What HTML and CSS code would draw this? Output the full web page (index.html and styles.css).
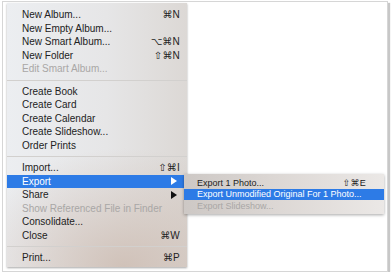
FILE: index.html
```html
<!DOCTYPE html>
<html lang="en">
<head>
    <meta charset="UTF-8">
    <title>File Menu - Photos</title>
    <link rel="stylesheet" href="styles.css">
</head>
<body>
    <div class="frame">
        <div class="menu">
            <!-- New items -->
            <div class="item"><span>New Album...</span><span class="key">⌘N</span></div>
            <div class="item"><span>New Empty Album...</span></div>
            <div class="item"><span>New Smart Album...</span><span class="key">⌥⌘N</span></div>
            <div class="item"><span>New Folder</span><span class="key">⇧⌘N</span></div>
            <div class="item disabled"><span>Edit Smart Album...</span></div>
            <div class="sep"></div>

            <!-- Create items -->
            <div class="item"><span>Create Book</span></div>
            <div class="item"><span>Create Card</span></div>
            <div class="item"><span>Create Calendar</span></div>
            <div class="item"><span>Create Slideshow...</span></div>
            <div class="item"><span>Order Prints</span></div>
            <div class="sep"></div>

            <div class="item"><span>Import...</span><span class="key">⇧⌘I</span></div>
            <div class="item selected"><span>Export</span><span class="arrow"></span></div>
            <div class="item"><span>Share</span><span class="arrow"></span></div>
            <div class="item disabled"><span>Show Referenced File in Finder</span></div>
            <div class="item"><span>Consolidate...</span></div>
            <div class="item"><span>Close</span><span class="key">⌘W</span></div>
            <div class="sep"></div>
            <div class="item"><span>Print...</span><span class="key">⌘P</span></div>

            <!-- Export submenu -->
            <div class="submenu">
                <div class="item"><span>Export 1 Photo...</span><span class="key">⇧⌘E</span></div>
                <div class="item selected"><span>Export Unmodified Original For 1 Photo...</span></div>
                <div class="item disabled"><span>Export Slideshow...</span></div>
            </div>
        </div>
    </div>
</body>
</html>
```

FILE: styles.css
```css
body {
    margin: 0;
    padding: 0;
    background: #fff;
    font-family: "Liberation Sans", Arial, "DejaVu Sans", sans-serif;
}

/* Screenshot frame */
.frame {
    width: 384px;
    height: 269px;
    margin: 1px 0 0 2px;
    border: 1px solid #d6d6d6;
    background: #fff;
    box-shadow: 2px 2px 1px rgba(0, 0, 0, 0.22);
}

/* Main menu panel */
.menu {
    position: relative;
    width: 180px;
    height: 259px;
    margin: 1px 0 0 4px;
    padding-top: 5px;
    background:
        radial-gradient(ellipse 90% 45% at 65% 100%, rgba(206, 190, 180, 0.9) 0%, rgba(206, 190, 180, 0) 100%),
        linear-gradient(90deg, #eceef1 0%, #e6e6e7 55%, #dcd8d5 100%);
    box-shadow: 0 1px 2px rgba(0, 0, 0, 0.35);
}

.item {
    display: flex;
    align-items: center;
    justify-content: space-between;
    height: 13.5px;
    padding: 0 7px 0 15px;
    font-size: 10px;
    color: #222;
    white-space: nowrap;
}

.item.disabled {
    color: #a9a7a6;
}

.item.selected {
    background: #2d7be6;
    color: #fff;
}

.key {
    letter-spacing: 0.2px;
}

.arrow {
    width: 0;
    height: 0;
    margin-right: 3px;
    border-left: 6px solid #111;
    border-top: 4px solid transparent;
    border-bottom: 4px solid transparent;
}

.selected .arrow {
    border-left-color: #fff;
}

.sep {
    height: 1px;
    margin: 4px 0;
    background: #d2d0ce;
}

/* Export submenu */
.submenu {
    position: absolute;
    top: 171px;
    left: 177px;
    width: 200px;
    height: 37px;
    padding-top: 3px;
    background: linear-gradient(90deg, #cdc8c5 0%, #dcd7d4 45%, #ebe8e6 100%);
    box-shadow: 0 1px 3px rgba(0, 0, 0, 0.35);
    z-index: 2;
}

.submenu .item {
    height: 11.5px;
    padding: 0 18px 0 13px;
    font-size: 9px;
}
```
